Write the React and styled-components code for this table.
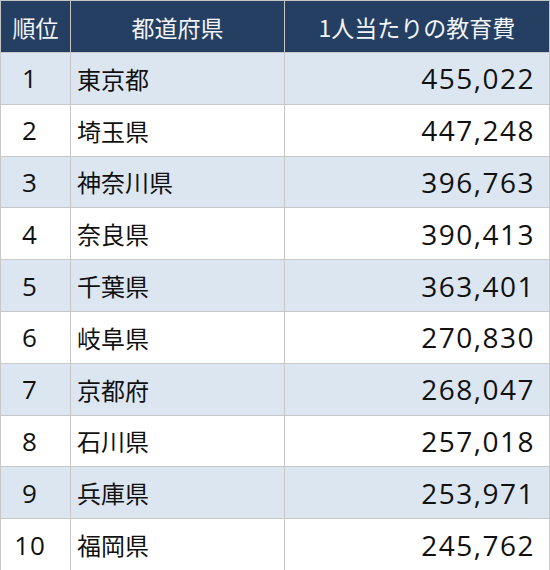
import styled, { createGlobalStyle } from "styled-components"

const GlobalStyle = createGlobalStyle`
  html, body {
    margin: 0;
    padding: 0;
    background: #ffffff;
  }
  body {
    font-family: "Noto Sans CJK JP", "Noto Sans", sans-serif;
  }
`

const rows = [
  { rank: 1, pref: "東京都", cost: "455,022" },
  { rank: 2, pref: "埼玉県", cost: "447,248" },
  { rank: 3, pref: "神奈川県", cost: "396,763" },
  { rank: 4, pref: "奈良県", cost: "390,413" },
  { rank: 5, pref: "千葉県", cost: "363,401" },
  { rank: 6, pref: "岐阜県", cost: "270,830" },
  { rank: 7, pref: "京都府", cost: "268,047" },
  { rank: 8, pref: "石川県", cost: "257,018" },
  { rank: 9, pref: "兵庫県", cost: "253,971" },
  { rank: 10, pref: "福岡県", cost: "245,762" },
]

export default function App() {
  return (
    <>
      <GlobalStyle />
      <Table>
        <colgroup>
          <col style={{ width: 70 }} />
          <col style={{ width: 214 }} />
          <col />
        </colgroup>
        <thead>
          <tr>
            <HeadCell>順位</HeadCell>
            <HeadCell>都道府県</HeadCell>
            <HeadCell>1人当たりの教育費</HeadCell>
          </tr>
        </thead>
        <tbody>
          {rows.map((r, i) => (
            <Row key={r.rank} $shaded={i % 2 === 0}>
              <RankCell>{r.rank}</RankCell>
              <PrefCell>{r.pref}</PrefCell>
              <CostCell>{r.cost}</CostCell>
            </Row>
          ))}
        </tbody>
      </Table>
    </>
  )
}

const Table = styled.table`
  width: 550px;
  height: 570px;
  border-collapse: collapse;
  table-layout: fixed;
  border: 1px solid #c4c4c4;
`

const HeadCell = styled.th`
  height: 51px;
  padding: 0;
  background-color: #243f62;
  color: #f2f4f7;
  font-weight: 400;
  font-size: 23px;
  text-align: center;
  border: 1px solid #c4c4c4;
  border-bottom: none;
`

const Row = styled.tr`
  height: 51.8px;
  background-color: ${(p) => (p.$shaded ? "#dce6f1" : "#ffffff")};
`

const Cell = styled.td`
  padding: 0;
  border: 1px solid #c8c8c8;
  color: #111111;
  font-size: 24px;
  vertical-align: middle;
`

const RankCell = styled(Cell)`
  padding-right: 11px;
  text-align: center;
  font-family: "Open Sans", "Noto Sans", sans-serif;
  font-size: 26px;
  letter-spacing: 1px;
`

const PrefCell = styled(Cell)`
  padding-left: 6px;
  text-align: left;
`

const CostCell = styled(Cell)`
  padding-right: 14px;
  text-align: right;
  font-family: "Open Sans", "Noto Sans", sans-serif;
  font-size: 28px;
  letter-spacing: 1.5px;
`
